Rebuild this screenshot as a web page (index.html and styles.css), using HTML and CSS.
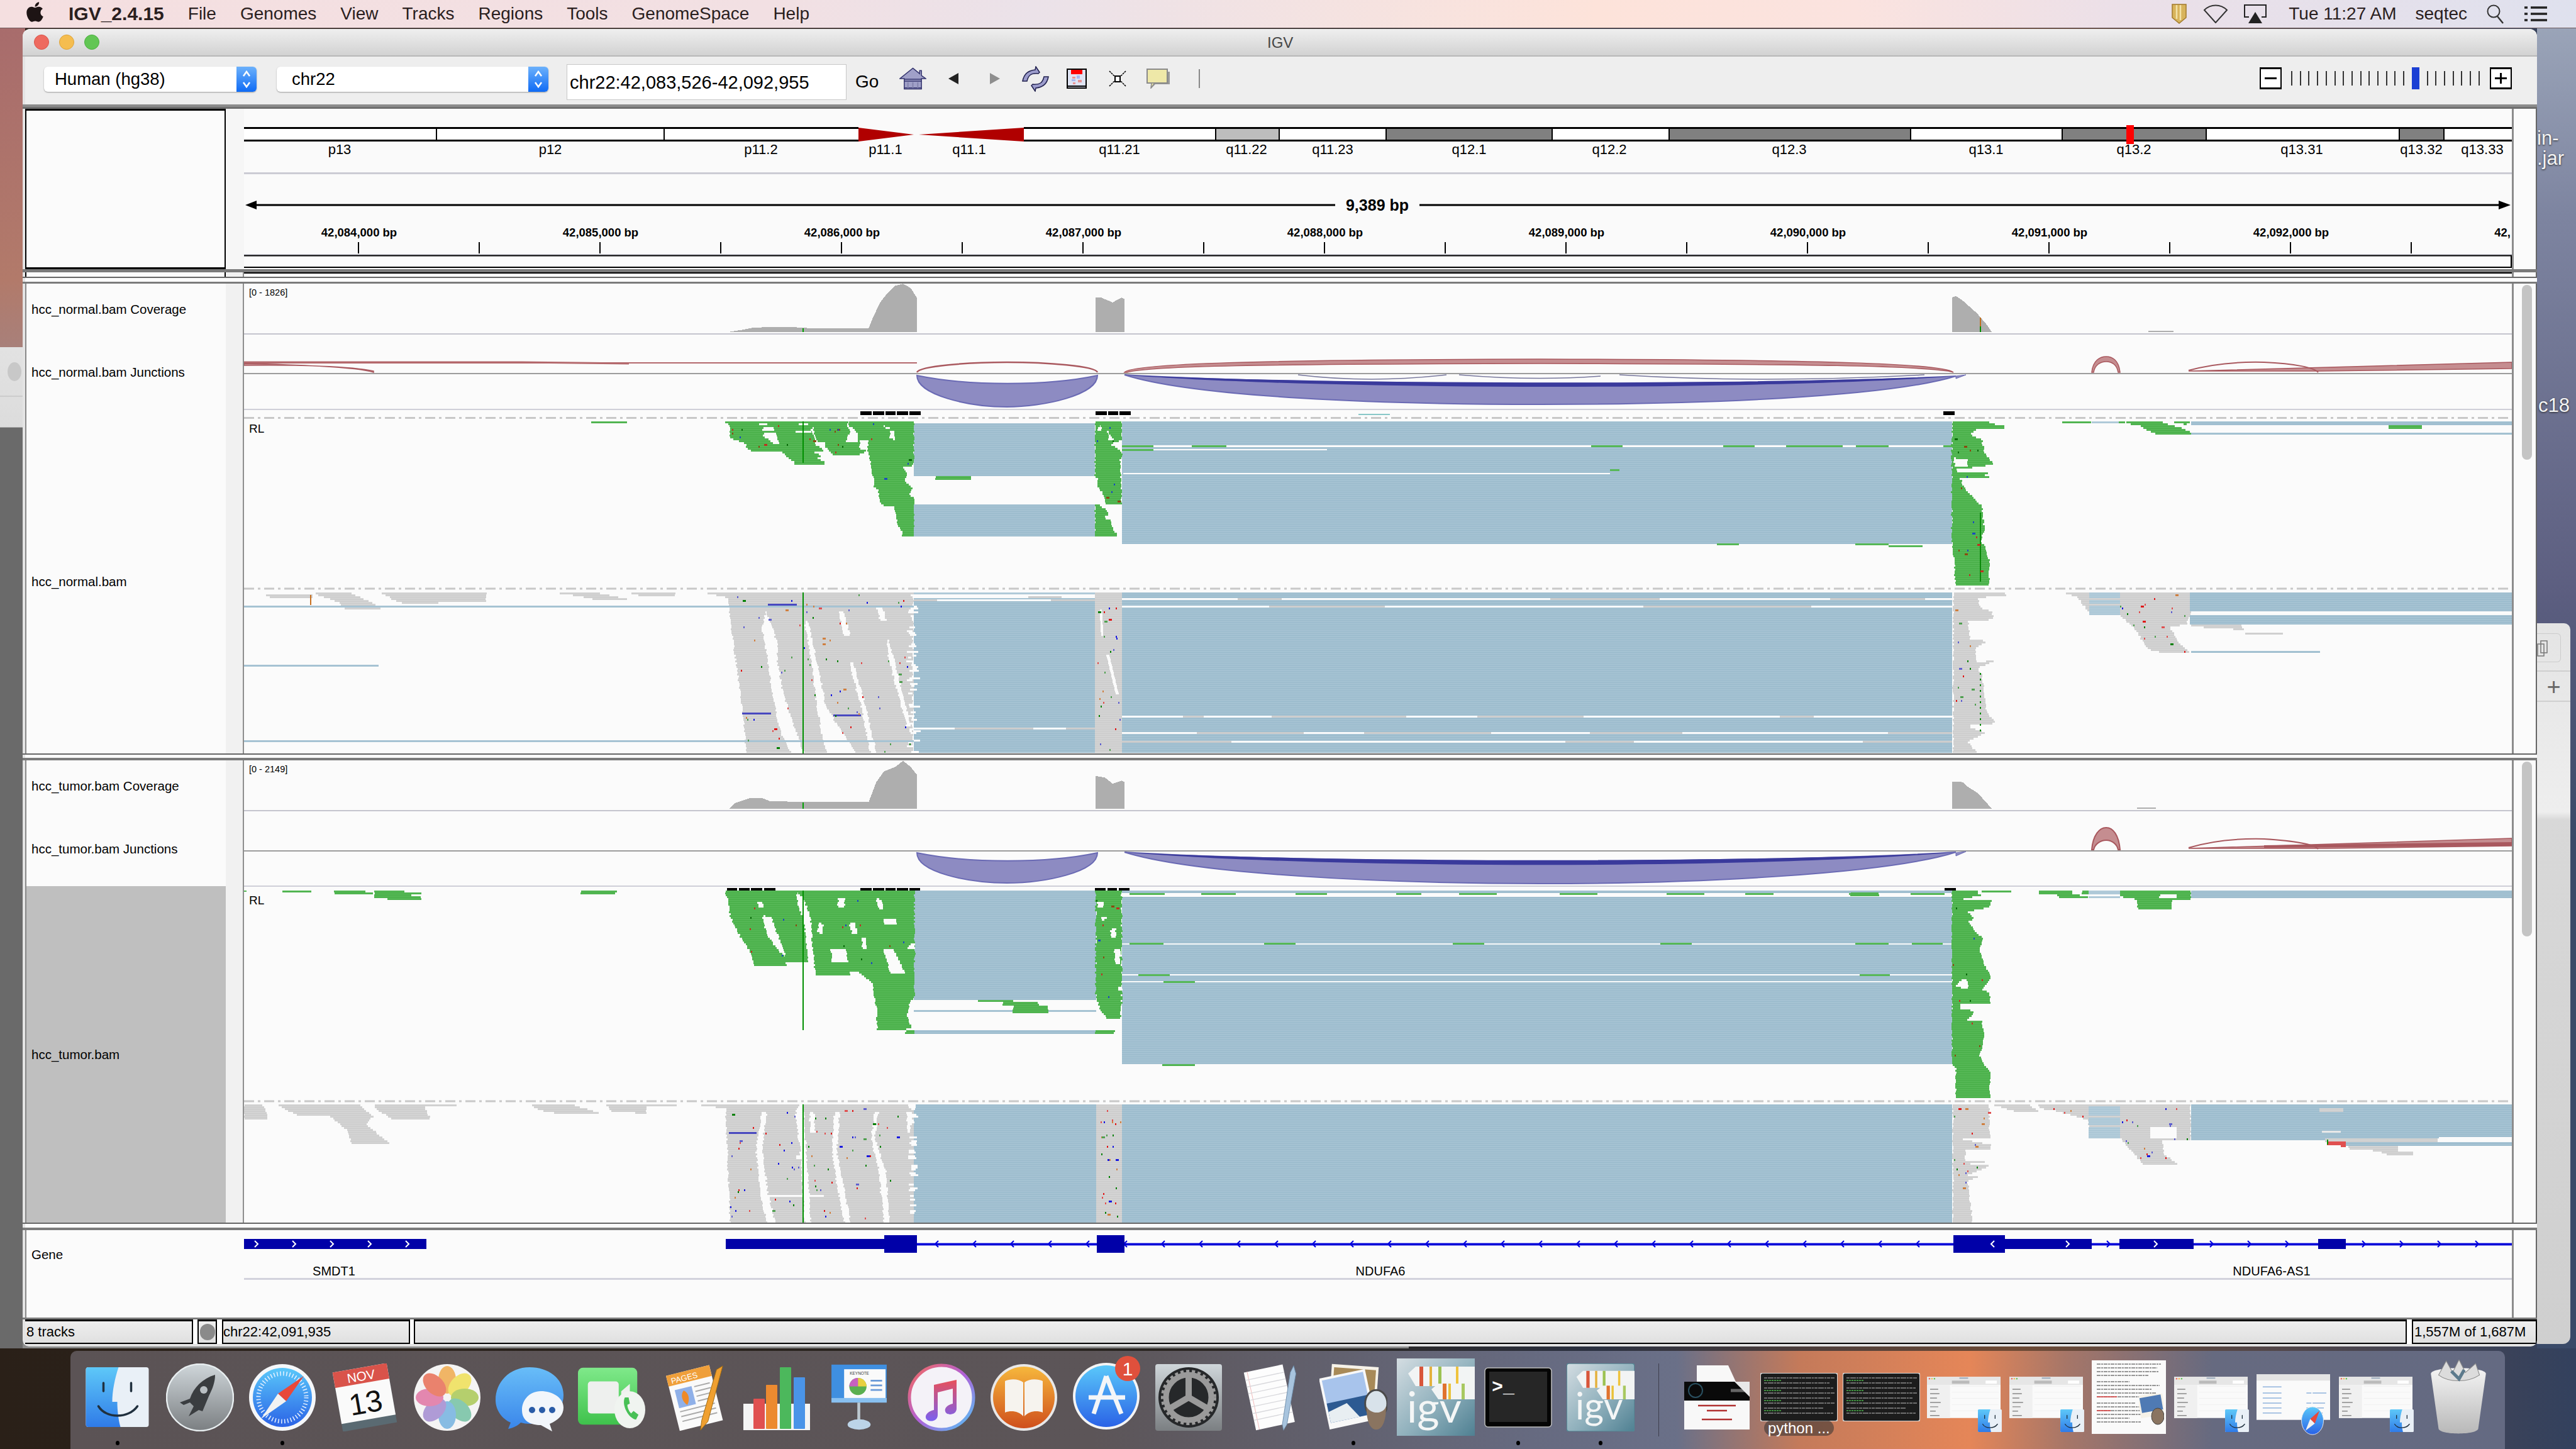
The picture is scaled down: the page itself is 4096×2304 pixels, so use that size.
FILE: index.html
```html
<!DOCTYPE html>
<html lang="en">
<head>
<meta charset="utf-8">
<title>IGV</title>
<link rel="stylesheet" href="styles.css">
</head>
<body>
<svg class="defs" aria-hidden="true">
  <defs>
    <linearGradient id="gFinder" x1="0" y1="0" x2="0" y2="1"><stop offset="0" stop-color="#5ec8f8"/><stop offset="1" stop-color="#2f7be8"/></linearGradient>
    <linearGradient id="gSilver" x1="0" y1="0" x2="0" y2="1"><stop offset="0" stop-color="#cfd6da"/><stop offset="1" stop-color="#7b7f82"/></linearGradient>
    <linearGradient id="gBlue" x1="0" y1="0" x2="0" y2="1"><stop offset="0" stop-color="#5ac8fa"/><stop offset="1" stop-color="#2a62e6"/></linearGradient>
    <linearGradient id="gMsg" x1="0" y1="0" x2="0" y2="1"><stop offset="0" stop-color="#68bdf8"/><stop offset="1" stop-color="#3a86ea"/></linearGradient>
    <linearGradient id="gFace" x1="0" y1="0" x2="0" y2="1"><stop offset="0" stop-color="#7fe98a"/><stop offset="1" stop-color="#3fc24c"/></linearGradient>
    <linearGradient id="gBook" x1="0" y1="0" x2="0" y2="1"><stop offset="0" stop-color="#f6b73c"/><stop offset="1" stop-color="#cf4f1c"/></linearGradient>
    <linearGradient id="gTunes" x1="0" y1="0" x2="1" y2="1"><stop offset="0" stop-color="#f86a5a"/><stop offset=".5" stop-color="#b060d8"/><stop offset="1" stop-color="#50c8f8"/></linearGradient>
    <linearGradient id="gNote" x1="0" y1="0" x2="0" y2="1"><stop offset="0" stop-color="#e8505a"/><stop offset="1" stop-color="#7a60f0"/></linearGradient>
    <linearGradient id="gIgv" x1="0" y1="0" x2="1" y2="1"><stop offset="0" stop-color="#d4dde2"/><stop offset=".55" stop-color="#8fb0bc"/><stop offset="1" stop-color="#4f8092"/></linearGradient>
    <linearGradient id="gTrash" x1="0" y1="0" x2="0" y2="1"><stop offset="0" stop-color="#f4f4f4"/><stop offset="1" stop-color="#b8b8b8"/></linearGradient>
    <symbol id="finder" viewBox="0 0 100 95">
      <rect width="100" height="95" rx="4" fill="#e9f0f7"/>
      <path d="M4 0H52C46 18 42 38 42 55H50C50 70 52 84 55 95H4a4 4 0 0 1-4-4V4a4 4 0 0 1 4-4z" fill="url(#gFinder)"/>
      <path d="M28 25V38M72 25V38" stroke="#20303e" stroke-width="3.5" stroke-linecap="round"/>
      <path d="M20 62C32 82 68 82 82 62" fill="none" stroke="#20303e" stroke-width="3.5" stroke-linecap="round"/>
    </symbol>
    <symbol id="igvmark" viewBox="0 0 124 123">
      <path d="M18 24L30 13H124V44H30Z" fill="#f2f4f4"/>
      <path d="M36 13h6v31h-6z" fill="#d8553a"/>
      <path d="M52 13h4v31h-4z" fill="#e4b13c"/><path d="M66 13h5v31h-5z" fill="#9cc252"/><path d="M94 13h4v31h-4z" fill="#efc33c"/>
      <path d="M55 49L66 40H124V65H66Z" fill="#f2f4f4"/>
      <path d="M73 40h6v25h-6z" fill="#e0732e"/><path d="M82 40h4v25h-4z" fill="#e9c23a"/><path d="M103 40h5v25h-5z" fill="#a8c860"/>
      <text x="16" y="102" class="igv-word">igv</text>
    </symbol>
    <symbol id="finderwin" viewBox="0 0 118 66">
      <rect width="118" height="66" fill="#fafafa"/>
      <rect width="118" height="13" fill="#e6e6e6"/>
      <circle cx="4" cy="3" r="1.2" fill="#ee6a5f"/><circle cx="8" cy="3" r="1.2" fill="#f5bd4f"/><circle cx="12" cy="3" r="1.2" fill="#62c654"/>
      <rect x="52" y="1" width="14" height="2" fill="#9ab"/>
      <rect x="40" y="6" width="28" height="5" fill="#bbb"/><rect x="94" y="6" width="18" height="5" fill="#fff"/>
      <rect y="13" width="37" height="53" fill="#f0f0f0"/>
      <path d="M5 20H18M5 27H20M5 34H16M5 41H22M5 48H18M5 55H14M5 62H20" stroke="#888" stroke-width="1.5"/>
      <path d="M40 15H115M40 24.5H115M40 34.5H115M40 44.5H115M40 54.5H115" stroke="#f0f0f0" stroke-width="1"/>
    </symbol>
    <symbol id="termlines" viewBox="0 0 123 77">
      <rect width="123" height="77" rx="4" fill="#1c1c1c" stroke="#d8d8d8" stroke-width="2"/>
      <path d="M6 8H118M6 16H110M6 24H116M6 32H118M6 40H112M6 48H118M6 56H100M6 64H116" stroke="#8a8a8a" stroke-width="1.5" stroke-dasharray="5 1 9 1 3 1"/>
      <path d="M6 12H34M6 28H34M6 44H34M6 60H34" stroke="#49b449" stroke-width="1.5" stroke-dasharray="3 1"/>
    </symbol>
  </defs>
</svg>

<div class="desk-left"><div class="back-sheet"><span class="back-dot"></span></div></div>
<div class="desk-right">
  <div class="desk-label desk-label-bin">in-</div>
  <div class="desk-label desk-label-jar">.jar</div>
  <div class="desk-label desk-label-c18">c18</div>
  <div class="back-win">
    <div class="back-btn"><svg class="back-copy" viewBox="0 0 20 30"><path d="M6 3H16V22H6zM1 8H11V27H1z" fill="none" stroke="#777" stroke-width="1.5"/></svg></div>
    <div class="back-plus">+</div>
  </div>
</div>
<div class="desk-under"></div>

<header class="menubar">
  <svg class="apple" viewBox="0 0 384 512"><path fill="#1d1414" d="M318.7 268.7c-.2-36.7 16.4-64.4 50-84.8-18.8-26.9-47.2-41.7-84.7-44.6-35.5-2.8-74.3 20.7-88.5 20.7-15 0-49.4-19.7-76.4-19.7C63.3 141.2 4 184.8 4 273.5q0 39.3 14.4 81.2c12.8 36.7 59 126.7 107.2 125.2 25.2-.6 43-17.9 75.8-17.9 31.8 0 48.3 17.9 76.4 17.9 48.6-.7 90.4-82.5 102.6-119.3-65.2-30.7-61.7-90-61.7-91.9zm-56.6-164.2c27.3-32.4 24.8-61.9 24-72.5-24.1 1.4-52 16.4-67.9 34.9-17.5 19.8-27.8 44.3-25.6 71.9 26.1 2 49.9-11.4 69.5-34.3z"/></svg>
  <nav class="menus">
    <strong class="app-name">IGV_2.4.15</strong>
    <span>File</span><span>Genomes</span><span>View</span><span>Tracks</span><span>Regions</span><span>Tools</span><span>GenomeSpace</span><span>Help</span>
  </nav>
  <div class="status-items">
    <svg class="st-shield" viewBox="0 0 24 32"><path d="M1 1H23V22L12 31L1 22Z" fill="#d8b45c" stroke="#a17a2c" stroke-width="1.5"/><path d="M8 2V24M14 2V26" stroke="#f3e2a8" stroke-width="2.5"/></svg>
    <svg class="st-wifi" viewBox="0 0 40 30"><path d="M20 29L2 9C12 -1 28 -1 38 9Z" fill="none" stroke="#333" stroke-width="2"/></svg>
    <svg class="st-air" viewBox="0 0 36 30"><path d="M8 20H1V1H35V20H28" fill="none" stroke="#222" stroke-width="2"/><path d="M18 12L29 30H7Z" fill="#222"/></svg>
    <span class="st-time">Tue 11:27 AM</span>
    <span class="st-user">seqtec</span>
    <svg class="st-search" viewBox="0 0 28 32"><circle cx="11" cy="12" r="9.5" fill="none" stroke="#333" stroke-width="2"/><path d="M17 20L26 31" stroke="#333" stroke-width="2.5"/></svg>
    <svg class="st-list" viewBox="0 0 36 24"><path d="M0 2H5M10 2H36M0 12H5M10 12H36M0 22H5M10 22H36" stroke="#222" stroke-width="3.5"/></svg>
  </div>
</header>

<main class="window">
  <div class="titlebar">
    <span class="light light-red"></span><span class="light light-yellow"></span><span class="light light-green"></span>
    <span class="win-title">IGV</span>
  </div>
  <div class="toolbar">
    <div class="combo combo-genome"><span class="combo-text">Human (hg38)</span><span class="stepper"><svg class="stepper-svg" viewBox="0 0 32 40"><path d="M11 15L16 8L21 15M11 25L16 32L21 25" fill="none" stroke="#fff" stroke-width="2.5"/></svg></span></div>
    <div class="combo combo-chr"><span class="combo-text combo-chr-text">chr22</span><span class="stepper"><svg class="stepper-svg" viewBox="0 0 32 40"><path d="M11 15L16 8L21 15M11 25L16 32L21 25" fill="none" stroke="#fff" stroke-width="2.5"/></svg></span></div>
    <div class="locus">chr22:42,083,526-42,092,955</div>
    <div class="go">Go</div>
    <div class="tools">
      <span class="tool"><svg class="ic-home" viewBox="0 0 44 36"><path d="M22 1L33 10V5H36V13L43 18H36V35H8V18H1Z" fill="#a0a0c8" stroke="#34346e" stroke-width="1.5"/><path d="M8 19H36M8 22H36M8 33H36" stroke="#34346e" stroke-width="1.5"/><path d="M14 24V33M22 24V33M30 24V33" stroke="#8484ae" stroke-width="2"/></svg></span>
      <span class="tool"><svg class="ic-arrow" viewBox="0 0 17 18"><path d="M16 0V18L0 9Z" fill="#222"/></svg></span>
      <span class="tool"><svg class="ic-arrow" viewBox="0 0 17 18"><path d="M1 0V18L17 9Z" fill="#8e8e8e"/></svg></span>
      <span class="tool"><svg class="ic-refresh" viewBox="0 0 43 41"><path d="M22 1L28 10L26 12C14 11 10 15 8 24H1C3 13 10 7 21 6Z" fill="#9c9ccc" stroke="#20204e" stroke-width="1.5"/><path d="M21 40L15 31L17 29C29 30 33 26 35 17H42C40 28 33 34 22 35Z" fill="#9c9ccc" stroke="#20204e" stroke-width="1.5"/></svg></span>
      <span class="tool"><svg class="ic-region" viewBox="0 0 32 32"><rect x="1" y="1" width="30" height="30" fill="#dfe4f4" stroke="#000" stroke-width="2"/><rect x="7" y="2" width="18" height="7" fill="#f00"/><path d="M2 28H30" stroke="#000" stroke-width="2"/><path d="M9 13h5v3H9zM18 18h6v4h-6zM10 22h4v3h-4z" fill="#e89494"/><path d="M16 11h5v5h-5zM8 17h6v3H8z" fill="#a8b8f0"/></svg></span>
      <span class="tool"><svg class="ic-resize" viewBox="0 0 28 26"><rect x="10" y="9" width="8" height="9" fill="#fff" stroke="#000" stroke-width="2"/><path d="M1 1L9 9M27 1L19 9M1 25L9 17M27 25L19 17" stroke="#000" stroke-width="1.5" stroke-dasharray="3 1"/></svg></span>
      <span class="tool"><svg class="ic-note" viewBox="0 0 38 32"><path d="M9 26L7 32L14 25H37V5H9Z" fill="#999"/><rect x="1" y="1" width="32" height="22" fill="#eee8a8" stroke="#8a8a8a" stroke-width="2"/><path d="M8 23L7 31L13 23Z" fill="#eee8a8" stroke="#8a8a8a" stroke-width="1.5"/></svg></span>
      <span class="tool"><i class="tool-sep"></i></span>
    </div>
    <div class="zoomer">
      <span class="zoom-btn"><i class="zoom-minus"></i></span>
      <div class="zoom-ticks"><i></i><i></i><i></i><i></i><i></i><i></i><i></i><i></i><i></i><i></i><i></i><i></i><i></i><i></i><i class="zoom-thumb"></i><i></i><i></i><i></i><i></i><i></i><i></i><i></i></div>
      <span class="zoom-btn"><i class="zoom-minus"></i><i class="zoom-vert"></i></span>
    </div>
  </div>
  <div class="bar bar7"></div>

  <section class="row header-row">
    <div class="name-col header-name"></div>
    <div class="gutter"></div>
    <svg class="data header-svg" viewBox="388 173 3606 255">
      <rect x="388" y="173" width="3606" height="255" fill="#fafafa"/>
      <g class="cyto">
        <rect x="388" y="204" width="977" height="19" fill="#fff"/>
        <rect x="1628" y="204" width="305" height="19" fill="#fff"/><rect x="1933" y="204" width="101" height="19" fill="#bdbdbd"/>
        <rect x="2034" y="204" width="170" height="19" fill="#fff"/><rect x="2204" y="204" width="264" height="19" fill="#808080"/>
        <rect x="2468" y="204" width="186" height="19" fill="#fff"/><rect x="2654" y="204" width="384" height="19" fill="#808080"/>
        <rect x="3038" y="204" width="241" height="19" fill="#fff"/><rect x="3279" y="204" width="229" height="19" fill="#808080"/>
        <rect x="3508" y="204" width="307" height="19" fill="#fff"/><rect x="3815" y="204" width="71" height="19" fill="#808080"/>
        <rect x="3886" y="204" width="108" height="19" fill="#fff"/>
        <path d="M388 203.5H1365M1628 203.5H3994M388 223.5H1365M1628 223.5H3994" stroke="#000" stroke-width="3"/>
        <path d="M694 204V223M1056 204V223M1933 204V223M2034 204V223M2204 204V223M2468 204V223M2654 204V223M3038 204V223M3279 204V223M3508 204V223M3815 204V223M3886 204V223" stroke="#000" stroke-width="2"/>
        <path d="M1365 203L1453 214L1365 225ZM1628 203L1461 214L1628 225Z" fill="#b00000"/>
        <rect x="3381" y="199" width="12" height="30" fill="#f00"/>
      </g>
      <g class="cyto-labels">
        <text x="540" y="245">p13</text><text x="875" y="245">p12</text><text x="1210" y="245">p11.2</text><text x="1408" y="245">p11.1</text><text x="1541" y="245">q11.1</text><text x="1780" y="245">q11.21</text><text x="1982" y="245">q11.22</text><text x="2119" y="245">q11.23</text><text x="2336" y="245">q12.1</text><text x="2559" y="245">q12.2</text><text x="2845" y="245">q12.3</text><text x="3158" y="245">q13.1</text><text x="3393" y="245">q13.2</text><text x="3660" y="245">q13.31</text><text x="3850" y="245">q13.32</text><text x="3947" y="245">q13.33</text>
      </g>
      <rect x="388" y="274" width="3606" height="3" fill="#cbcbd4"/>
      <path d="M405 326H2123M2257 326H3976" stroke="#000" stroke-width="3"/>
      <path d="M390 326L408 319V333ZM3992 326L3973 319V333Z" fill="#000"/>
      <text class="span-label" x="2190" y="335">9,389 bp</text>
      <g class="ruler-labels">
        <text x="571" y="376">42,084,000 bp</text><text x="955" y="376">42,085,000 bp</text><text x="1339" y="376">42,086,000 bp</text><text x="1723" y="376">42,087,000 bp</text><text x="2107" y="376">42,088,000 bp</text><text x="2491" y="376">42,089,000 bp</text><text x="2875" y="376">42,090,000 bp</text><text x="3259" y="376">42,091,000 bp</text><text x="3643" y="376">42,092,000 bp</text><text x="3979" y="376">42,</text>
      </g>
      <path d="M570 385V403M762 385V403M954 385V403M1146 385V403M1338 385V403M1530 385V403M1722 385V403M1914 385V403M2106 385V403M2298 385V403M2490 385V403M2682 385V403M2874 385V403M3066 385V403M3258 385V403M3450 385V403M3642 385V403M3834 385V403" stroke="#000" stroke-width="2"/>
      <rect x="388" y="404" width="3606" height="2" fill="#cbcbd4"/>
      <path d="M388 406.5H3993V425H388" fill="#fbfbfb" stroke="#000" stroke-width="2"/>
    </svg>
    <div class="scroll-col"></div>
  </section>
  <div class="bar bar5"></div>
  <div class="row blank7"><div class="name-col pane-name"></div><div class="gutter"></div><div class="pane-data"></div><div class="scroll-col"></div></div>
  <div class="bar bar2"></div>
  <div class="blank6"></div>
  <div class="bar bar3"></div>

  <section class="row panel panel-normal">
    <div class="name-col names">
      <div class="name name-cov">hcc_normal.bam Coverage</div>
      <div class="name name-jun">hcc_normal.bam Junctions</div>
      <div class="name name-bam-n">hcc_normal.bam</div>
    </div>
    <div class="gutter"></div>
    <svg class="data" id="trackNormal" viewBox="388 451 3606 747"></svg>
    <div class="scroll-col"><div class="thumb"></div></div>
  </section>
  <div class="bar bar2"></div>
  <div class="blank5"></div>
  <div class="bar bar4"></div>

  <section class="row panel panel-tumor">
    <div class="name-col names">
      <div class="name name-cov">hcc_tumor.bam Coverage</div>
      <div class="name name-jun">hcc_tumor.bam Junctions</div>
      <div class="name name-bam-t">hcc_tumor.bam</div>
    </div>
    <div class="gutter"></div>
    <svg class="data" id="trackTumor" viewBox="388 1209 3606 735"></svg>
    <div class="scroll-col"><div class="thumb"></div></div>
  </section>
  <div class="bar bar2"></div>
  <div class="blank6"></div>
  <div class="bar bar4"></div>

  <section class="row panel panel-gene">
    <div class="name-col names"><div class="name name-gene">Gene</div></div>
    <svg class="data gene-svg" id="trackGene" viewBox="359 1956 3635 139">
      <rect x="359" y="1956" width="3635" height="139" fill="#fbfbfb"/>
      <rect x="388" y="2032" width="3606" height="3" fill="#d2d2dc"/>
      <g class="gene-names"><text x="531" y="2028">SMDT1</text><text x="2195" y="2028">NDUFA6</text><text x="3612" y="2028">NDUFA6-AS1</text></g>
    </svg>
    <div class="scroll-col"></div>
  </section>
  <div class="bar bar3"></div>
  <footer class="statusbar">
    <div class="cell cell-tracks">8 tracks</div>
    <div class="cell cell-icon"><i class="busy"></i></div>
    <div class="cell cell-pos">chr22:42,091,935</div>
    <div class="cell cell-fill"></div>
    <div class="cell cell-mem">1,557M of 1,687M</div>
  </footer>
</main>

<footer class="dock">
  <div class="slot"><svg class="ic ic-finder"><use href="#finder"/></svg><i class="run"></i></div>
  <div class="slot"><svg class="ic" viewBox="0 0 108 108"><circle cx="54" cy="54" r="53" fill="url(#gSilver)" stroke="#e8eef0" stroke-width="2.5"/><path d="M78 18C58 24 44 38 38 56L22 62L28 66L38 62L44 68L36 84L52 74L58 76L68 52C74 40 78 30 78 18Z" fill="#3a3d40"/><circle cx="60" cy="42" r="6" fill="#b9bfc3"/></svg></div>
  <div class="slot"><svg class="ic" viewBox="0 0 108 108"><circle cx="54" cy="54" r="53" fill="#f5f7f9"/><circle cx="54" cy="54" r="47" fill="url(#gBlue)"/><circle cx="54" cy="54" r="38" fill="none" stroke="#e8f2ff" stroke-width="7" stroke-dasharray="1.5 3.5"/><path d="M88 20L47 48L60 60Z" fill="#e8483a"/><path d="M20 88L47 48L60 60Z" fill="#f2f2f2"/></svg><i class="run"></i></div>
  <div class="slot"><svg class="ic" viewBox="0 0 104 104"><g transform="rotate(-10 52 52)"><rect x="10" y="6" width="84" height="92" fill="#5a6a72"/><rect x="10" y="6" width="84" height="80" fill="#fafafa"/><rect x="10" y="6" width="84" height="24" fill="#d9534a"/><text class="cal-month" x="52" y="26">NOV</text><text class="cal-day" x="52" y="76">13</text></g></svg></div>
  <div class="slot"><svg class="ic" viewBox="0 0 108 108"><circle cx="54" cy="54" r="53" fill="#f4f4f4"/><g opacity=".82"><ellipse cx="54" cy="26" rx="14" ry="22" fill="#f0a848"/><ellipse cx="74" cy="34" rx="14" ry="22" fill="#f0e050" transform="rotate(45 74 34)"/><ellipse cx="82" cy="54" rx="22" ry="14" fill="#a8c850"/><ellipse cx="74" cy="74" rx="14" ry="22" fill="#70c0a0" transform="rotate(-45 74 74)"/><ellipse cx="54" cy="82" rx="14" ry="22" fill="#70b0e0"/><ellipse cx="34" cy="74" rx="14" ry="22" fill="#a088d0" transform="rotate(45 34 74)"/><ellipse cx="26" cy="54" rx="22" ry="14" fill="#e070a0"/><ellipse cx="34" cy="34" rx="14" ry="22" fill="#e86a50" transform="rotate(-45 34 34)"/></g></svg></div>
  <div class="slot"><svg class="ic" viewBox="0 0 108 108"><path d="M54 6C22 6 0 30 0 58C0 74 10 88 24 94L20 104C30 102 36 98 40 94Q47 96 54 96C84 96 108 78 108 50C108 24 84 6 54 6Z" fill="url(#gMsg)"/><path d="M72 44C54 44 42 58 42 74C42 92 56 98 72 98L90 108L86 96C100 90 108 82 108 70C108 54 90 44 72 44Z" fill="#f2f6fb"/><circle cx="58" cy="74" r="5" fill="#2a5ca8"/><circle cx="74" cy="74" r="5" fill="#2a5ca8"/><circle cx="90" cy="74" r="5" fill="#2a5ca8"/></svg></div>
  <div class="slot"><svg class="ic" viewBox="0 0 110 100"><rect x="0" y="2" width="96" height="92" rx="8" fill="url(#gFace)"/><rect x="16" y="24" width="50" height="52" rx="5" fill="#eef0ee"/><path d="M70 40L84 28V72L70 60Z" fill="#eef0ee"/><ellipse cx="84" cy="70" rx="25" ry="30" fill="#f0f4f0"/><path d="M76 50C70 62 82 84 94 86L98 78L90 72L86 76C82 72 80 66 80 62L84 60L82 50Z" fill="#48c056"/></svg></div>
  <div class="slot"><svg class="ic" viewBox="0 0 100 110"><g transform="rotate(-14 50 55)"><rect x="14" y="10" width="72" height="92" fill="#fafafa"/><path d="M14 10H86V28H14Z" fill="#ef9f3a"/><text class="pages-word" x="20" y="25">PAGES</text><rect x="22" y="36" width="28" height="30" fill="#8fb0e8"/><path d="M36 40C44 46 42 58 36 64C30 58 28 46 36 40Z" fill="#ee8a28"/><path d="M54 38H80M54 46H80M54 54H80M54 62H80M22 72H80M22 80H80M22 88H80" stroke="#aaa" stroke-width="2"/></g><path d="M96 4L86 10L62 92L60 108L72 94Z" fill="#f0a030" stroke="#a06a10" stroke-width="1"/></svg></div>
  <div class="slot"><svg class="ic ic-num" viewBox="0 0 106 108"><rect x="0" y="64" width="106" height="42" fill="#f4f4f4"/><rect x="16" y="56" width="18" height="48" rx="1" fill="#e05050"/><rect x="36" y="34" width="18" height="70" rx="1" fill="#ec8a30"/><rect x="58" y="6" width="18" height="98" rx="1" fill="#4cb85c"/><rect x="80" y="22" width="18" height="82" rx="1" fill="#4a94e8"/></svg></div>
  <div class="slot"><svg class="ic" viewBox="0 0 100 118"><rect x="2" y="2" width="96" height="64" fill="#3f8fe0"/><rect x="2" y="60" width="96" height="8" fill="#88c0f0"/><rect x="24" y="10" width="72" height="50" fill="#fafafa"/><text class="key-word" x="34" y="20">KEYNOTE</text><circle cx="48" cy="40" r="15" fill="#5aaf50"/><path d="M48 40V25A15 15 0 0 1 63 40Z" fill="#e8d040"/><path d="M48 40H33A15 15 0 0 1 48 25Z" fill="#c860c0"/><path d="M70 30H90M70 38H90M70 46H90" stroke="#6a9ad8" stroke-width="3"/><rect x="47" y="68" width="5" height="36" fill="#bcc8d0"/><ellipse cx="50" cy="106" rx="20" ry="9" fill="#bcd4e8"/></svg></div>
  <div class="slot"><svg class="ic" viewBox="0 0 108 108"><circle cx="54" cy="54" r="51" fill="#f4f2f8" stroke="url(#gTunes)" stroke-width="5"/><path d="M42 34L78 26V72C78 82 62 84 60 76C58 68 70 64 72 64V40L48 46V82C48 94 30 94 29 86C28 78 40 74 42 74Z" fill="url(#gNote)"/></svg></div>
  <div class="slot"><svg class="ic" viewBox="0 0 108 108"><circle cx="54" cy="54" r="53" fill="#e8e8e8"/><circle cx="54" cy="54" r="49" fill="url(#gBook)"/><path d="M53 30C46 24 32 24 24 28V78C34 74 46 76 53 84ZM55 30C62 24 76 24 84 28V78C74 74 62 76 55 84Z" fill="#f6f3ee"/></svg></div>
  <div class="slot"><svg class="ic ic-store" viewBox="0 0 108 118"><circle cx="54" cy="64" r="53" fill="#f4f4f4"/><circle cx="54" cy="64" r="49" fill="url(#gBlue)"/><path d="M54 32L34 92M54 32L78 92M26 66H84" stroke="#f4f6f8" stroke-width="7" fill="none"/><circle cx="88" cy="20" r="20" fill="#e0503c"/><text class="badge-num" x="88" y="31">1</text></svg></div>
  <div class="slot"><svg class="ic" viewBox="0 0 108 108"><rect x="1" y="1" width="106" height="106" rx="4" fill="url(#gSilver)"/><circle cx="54" cy="54" r="48" fill="#26282a"/><circle cx="54" cy="54" r="36" fill="none" stroke="#9a9a9a" stroke-width="9"/><circle cx="54" cy="54" r="41" fill="none" stroke="#9a9a9a" stroke-width="6" stroke-dasharray="5 4"/><path d="M54 54V20M54 54L25 71M54 54L83 71" stroke="#9a9a9a" stroke-width="10"/></svg></div>
  <div class="slot"><svg class="ic" viewBox="0 0 100 120"><g transform="rotate(-12 46 60)"><rect x="12" y="8" width="70" height="104" fill="#fdfdfd"/><path d="M18 8V112" stroke="#f2b8b8" stroke-width="1"/><path d="M12 22H82M12 34H82M12 46H82M12 58H82M12 70H82M12 82H82M12 94H82" stroke="#d8d8dc" stroke-width="1.5"/></g><path d="M90 4L84 16L70 108L72 118L78 108L94 18Z" fill="#a8c4de" stroke="#6a8aa8" stroke-width="1"/></svg></div>
  <div class="slot"><svg class="ic" viewBox="0 0 110 104"><g transform="rotate(4 50 30)"><rect x="18" y="0" width="76" height="82" fill="#f6f2e8"/><rect x="22" y="5" width="68" height="70" fill="#a88a58"/></g><g transform="rotate(-12 40 60)"><rect x="8" y="14" width="76" height="84" fill="#f8f8f8"/><rect x="12" y="18" width="68" height="70" fill="#a8c4ec"/><path d="M12 56H80V88H12Z" fill="#2d5a92"/><path d="M12 70L44 62L60 88H12Z" fill="#e8eef2"/></g><ellipse cx="92" cy="62" rx="18" ry="22" fill="#d8e2ea" stroke="#4a4a4a" stroke-width="3"/><path d="M76 66C76 90 82 104 92 104S108 90 108 66C104 80 82 80 76 66Z" fill="#8a7460"/></svg><i class="run"></i></div>
  <div class="slot"><svg class="ic ic-igv-big" viewBox="0 0 124 123"><rect width="124" height="123" fill="url(#gIgv)"/><use href="#igvmark"/></svg></div>
  <div class="slot"><svg class="ic" viewBox="0 0 108 96"><rect x="1" y="1" width="106" height="94" rx="5" fill="#050505" stroke="#bdbdbd" stroke-width="1.5"/><rect x="8" y="7" width="92" height="80" fill="#262626"/><text class="term-word" x="12" y="40">&gt;_</text></svg><i class="run"></i></div>
  <div class="slot"><svg class="ic" viewBox="0 0 124 124"><rect width="124" height="124" rx="5" fill="url(#gIgv)" stroke="#4f8a96" stroke-width="2"/><use href="#igvmark"/></svg><i class="run"></i></div>
  <div class="dock-sep"><i></i></div>
  <div class="slot"><svg class="ic" viewBox="0 0 108 102"><path d="M22 0H72L84 26V40H22Z" fill="#f8f8f8"/><rect x="2" y="26" width="104" height="76" fill="#f8f8f8"/><rect x="2" y="26" width="104" height="30" fill="#0a0a0a"/><circle cx="20" cy="40" r="11" fill="none" stroke="#2a5060" stroke-width="2"/><path d="M76 40H100" stroke="#666" stroke-width="5"/><path d="M24 64H84M38 72H70M30 86H78" stroke="#b03030" stroke-width="2.5"/><path d="M82 26L106 26L106 50Z" fill="#e8e8e8"/></svg></div>
  <div class="slot slot-term"><svg class="ic-thumb"><use href="#termlines"/></svg><span class="python-tag">python ...</span></div>
  <div class="slot slot-term"><svg class="ic-thumb"><use href="#termlines"/></svg></div>
  <div class="slot slot-win"><svg class="ic-win"><use href="#finderwin"/></svg><svg class="ic-mini"><use href="#finder"/></svg></div>
  <div class="slot slot-win"><svg class="ic-win"><use href="#finderwin"/></svg><svg class="ic-mini"><use href="#finder"/></svg></div>
  <div class="slot slot-doc"><svg class="ic-doc" viewBox="0 0 118 117"><rect width="118" height="117" fill="#fafafa"/><path d="M8 6H110M8 12H104M8 18H106M8 24H90M8 34H60M8 40H108M8 46H96M8 52H102M8 58H84M8 68H70M8 74H108M8 80H88M8 86H100M8 92H60M8 98H78" stroke="#777" stroke-width="1.6" stroke-dasharray="6 1 3 1"/><path d="M8 58H40M8 80H30" stroke="#e04040" stroke-width="1.6"/></svg><svg class="ic-mini-prev" viewBox="0 0 40 50"><rect width="40" height="36" fill="#f6f2e8" transform="rotate(-10 20 18)"/><rect x="3" y="4" width="34" height="24" fill="#4f7ab4" transform="rotate(-10 20 18)"/><ellipse cx="30" cy="36" rx="10" ry="13" fill="#8a7460" stroke="#444"/></svg></div>
  <div class="slot slot-win"><svg class="ic-win"><use href="#finderwin"/></svg><svg class="ic-mini"><use href="#finder"/></svg></div>
  <div class="slot slot-safari"><svg class="ic-win ic-win-safari" viewBox="0 0 118 73"><rect width="118" height="73" fill="#fafafa"/><rect width="118" height="10" fill="#e4e4e4"/><path d="M10 20H40M10 30H112M10 38H50M10 46H110M10 54H108M10 62H106" stroke="#8fb2dc" stroke-width="1.5" stroke-dasharray="30 40 8 2"/></svg><svg class="ic-mini-safari" viewBox="0 0 40 50"><ellipse cx="20" cy="25" rx="19" ry="24" fill="url(#gBlue)" stroke="#eee"/><path d="M32 8L16 22L24 30Z" fill="#e8483a"/><path d="M8 42L16 22L24 30Z" fill="#f2f2f2"/></svg></div>
  <div class="slot slot-win"><svg class="ic-win"><use href="#finderwin"/></svg><svg class="ic-mini"><use href="#finder"/></svg></div>
  <div class="slot"><svg class="ic ic-trash" viewBox="0 0 90 116"><path d="M2 22C2 10 88 10 88 22L76 108C74 118 16 118 14 108Z" fill="url(#gTrash)"/><path d="M14 24L26 2L36 20L46 0L56 20L72 6L78 24C60 36 30 36 14 24Z" fill="#dcdcdc" stroke="#888"/><path d="M34 18L46 30L54 16" stroke="#5c7a8c" stroke-width="5" fill="none"/></svg></div>
</footer>
<script src="app.js"></script>
</body>
</html>
```
FILE: styles.css
```css
* { box-sizing: border-box; }
html, body { margin: 0; padding: 0; }
body {
  width: 4096px; height: 2304px; position: relative; overflow: hidden;
  font-family: "Liberation Sans", Arial, sans-serif; color: #000;
  background: linear-gradient(90deg, #2a2018 0%, #2a2623 52%, #2a3040 62%, #6d4a35 78%, #33415e 100%);
}
.defs { position: absolute; width: 0; height: 0; }

/* desktop behind the window */
.desk-left { position: absolute; left: 0; top: 44px; width: 40px; height: 2100px;
  background: linear-gradient(180deg, #a86c6c 0, #b27a6a 400px, #a8807a 508px, #e2e2e2 508px, #dcdcdc 636px, #6a6a6a 636px); }
.back-sheet { position: absolute; left: 0; top: 508px; width: 36px; height: 128px; border-bottom: 1px solid #aaa; }
.back-sheet::before { content: ""; position: absolute; left: 0; right: 0; top: 77px; border-top: 2px solid #ccc; }
.back-dot { position: absolute; left: 12px; top: 24px; width: 22px; height: 30px; border-radius: 50%; background: #c8c8c8; }
.desk-right { position: absolute; left: 4034px; top: 44px; width: 62px; height: 2100px;
  background: linear-gradient(180deg, #9aa4b8 0, #7d84a0 300px, #5c5e80 900px, #3a4a68 1290px); overflow: hidden; }
.desk-label { position: absolute; left: 0; color: #f4f4f4; font-size: 31px; text-shadow: 0 1px 3px #222; }
.desk-label-bin { top: 158px; }
.desk-label-jar { top: 190px; }
.desk-label-c18 { top: 583px; left: 2px; }
.back-win { position: absolute; left: 0; top: 947px; width: 53px; height: 1146px; border-radius: 0 10px 12px 0;
  background: linear-gradient(180deg, #e4e4e4 0, #eeeeee 300px, #d8d8d8 313px, #cfcfcf 100%); }
.back-btn { position: absolute; left: 0; top: 16px; width: 38px; height: 46px; border: 1px solid #ccc; border-left: 0; border-radius: 0 6px 6px 0; }
.back-copy { width: 20px; height: 30px; display: block; margin-top: 8px; }
.back-plus { position: absolute; left: 0; top: 75px; width: 53px; height: 50px; border-top: 2px solid #cfcfcf; border-bottom: 2px solid #cfcfcf; text-align: center; font-size: 38px; line-height: 48px; color: #666; }
.desk-under { position: absolute; left: 36px; top: 2136px; width: 2204px; height: 8px; background: #8a8a8a; }

/* menu bar */
.menubar { position: absolute; left: 0; top: 0; width: 4096px; height: 45px; display: flex; align-items: center; padding: 0 46px 1px 42px;
  border-bottom: 1px solid #6e5b5d; font-size: 28px; color: #2a2020;
  background: linear-gradient(90deg, #f5dfe0 0, #f2e0e3 30%, #ebe2e9 40%, #fde3da 62%, #fbe3df 72%, #ece0e8 82%, #dfe1ee 100%); }
.apple { width: 27px; height: 36px; flex: none; margin-top: -5px; }
.menus { display: flex; align-items: center; gap: 38px; margin-left: 40px; }
.app-name { font-weight: 700; font-size: 30px; }
.status-items { margin-left: auto; display: flex; align-items: center; }
.st-shield { width: 24px; height: 32px; }
.st-wifi { width: 40px; height: 30px; margin-left: 26px; }
.st-air { width: 36px; height: 30px; margin-left: 25px; }
.st-time { margin-left: 35px; }
.st-user { margin-left: 30px; }
.st-search { width: 28px; height: 32px; margin-left: 31px; }
.st-list { width: 36px; height: 24px; margin-left: 32px; }

/* window */
.window { position: absolute; left: 36px; top: 46px; width: 3998px; height: 2095px; padding: 0 0 4px 4px; border-radius: 12px 12px 10px 10px; background: #e4e4e4; display: flex; flex-direction: column; overflow: hidden; }
.titlebar { flex: none; height: 44px; margin-left: -4px; padding-left: 18px; display: flex; align-items: center; gap: 16px; position: relative; background: linear-gradient(180deg, #efefef, #d2d2d2); border-bottom: 2px solid #b8b8b8; }
.light { width: 24px; height: 24px; border-radius: 50%; }
.light-red { background: #ee6a5f; border: 1px solid #d8544a; }
.light-yellow { background: #f5bd4f; border: 1px solid #dca23a; }
.light-green { background: #62c654; border: 1px solid #4cae40; }
.win-title { position: absolute; left: 1979px; top: 8px; font-size: 24px; color: #454545; }
.toolbar { flex: none; height: 76px; background: #eeeeee; display: flex; align-items: center; padding: 0 40px 0 30px; }
.combo { height: 40px; background: #fff; border-radius: 6px; box-shadow: 0 1px 2px #999; display: flex; align-items: center; justify-content: space-between; margin-top: -4px; }
.combo-genome { width: 338px; }
.combo-chr { width: 432px; margin-left: 32px; }
.combo-text { font-size: 27.5px; padding-left: 17px; }
.combo-chr-text { padding-left: 24px; }
.stepper { width: 32px; height: 40px; border-radius: 0 6px 6px 0; background: linear-gradient(180deg, #6cb1fb, #0f6bf5); flex: none; }
.stepper-svg { display: block; width: 32px; height: 40px; }
.locus { width: 445px; height: 57px; margin-left: 29px; margin-top: 4px; padding: 12px 0 0 4px; background: #fff; border: 1px solid #c8c8c8; font-size: 29px; white-space: nowrap; }
.go { width: 39px; margin-left: 14px; font-size: 28px; margin-top: 4px; }
.tools { display: flex; align-items: center; margin-left: 20px; margin-top: -6px; }
.tool { width: 65px; display: flex; justify-content: center; align-items: center; }
.ic-home { width: 43px; height: 36px; }
.ic-arrow { width: 17px; height: 18px; }
.ic-refresh { width: 43px; height: 41px; }
.ic-region { width: 32px; height: 32px; }
.ic-resize { width: 28px; height: 26px; }
.ic-note { width: 38px; height: 32px; }
.tool-sep { width: 2px; height: 30px; background: #888; }
.zoomer { margin-left: auto; display: flex; align-items: center; margin-top: -8px; }
.zoom-btn { width: 35px; height: 35px; border-style: solid; border-color: #000; border-width: 3px 2px; background: #fff; position: relative; display: block; }
.zoom-minus { position: absolute; left: 6px; right: 6px; top: 13px; height: 3px; background: #000; }
.zoom-vert { position: absolute; left: 14px; top: 6px; bottom: 6px; width: 3px; background: #000; }
.zoom-ticks { width: 300px; margin: 0 16px 0 15px; height: 35px; display: flex; align-items: center; justify-content: space-between; }
.zoom-ticks i { width: 2px; height: 23px; background: #333; }
.zoom-ticks .zoom-thumb { width: 12px; height: 35px; background: #1b3fd4; }

.bar { flex: none; background: #7b7b7b; margin-left: -4px; }
.bar7 { height: 7px; background: linear-gradient(180deg, #8c8c8c 0 4px, #6f6f6f 4px); }
.bar5 { height: 5px; background: #7a7a7a; }
.bar4 { height: 4px; }
.bar3 { height: 3px; }
.bar2 { height: 2px; background: #666; }
.blank5 { flex: none; height: 5px; background: #fbfbfb; }
.blank6 { flex: none; height: 6px; background: #fbfbfb; }
.row { flex: none; display: flex; background: #fbfbfb; }
.name-col { width: 319px; flex: none; background: #fbfbfb; }
.gutter { width: 29px; flex: none; background: #f1f1f1; border-right: 2px solid #8e8e8e; }
.data { width: 3606px; flex: none; display: block; background: #fbfbfb; overflow: hidden; }
.scroll-col { width: 40px; flex: none; background: #fbfbfb; border-left: 3px solid #8c8c8c; border-right: 2px solid #666; padding: 2px 0 0 13px; }
.thumb { width: 16px; height: 278px; border-radius: 8px; background: #c4c4c4; }
.header-row { height: 255px; }
.header-name { border-top: 3px solid #000; border-bottom: 3px solid #000; border-right: 2px solid #000; border-left: 2px solid #000; height: 255px; }
.header-row .gutter { border-right: 0; background: #f6f6f6; }
.header-svg { height: 255px; }
.blank7 { height: 7px; }
.pane-name { border-left: 2px solid #000; border-right: 2px solid #000; }
.pane-data { width: 3606px; border-top: 2px solid #000; background: #fbfbfb; }
.panel-normal { height: 747px; }
.panel-tumor { height: 735px; }
.panel-gene { height: 139px; }
.panel .data { height: 100%; }
.gene-svg { width: 3635px; }
.panel-gene .names { width: 319px; }
.names { display: flex; flex-direction: column; border-left: 2px solid #888; }
.name { display: flex; align-items: center; padding-left: 8px; font-size: 20.5px; white-space: nowrap; }
.name-cov { height: 81px; }
.name-jun { height: 119px; }
.name-bam-n { flex: 1; }
.name-bam-t { flex: 1; background: #bfbfbf; }
.name-gene { height: 78px; }

.statusbar { flex: none; height: 39px; display: flex; background: #fff; margin-left: 0; font-size: 22px; }
.cell { height: 39px; border-top: 3px solid #000; border-bottom: 2px solid #000; background: linear-gradient(180deg, #eeeeee, #e0e0e0); display: flex; align-items: center; white-space: nowrap; }
.cell-tracks { width: 267px; border-right: 2px solid #000; padding-left: 2px; }
.cell-icon { width: 31px; margin-left: 7px; border-left: 2px solid #000; border-right: 2px solid #000; justify-content: center; }
.busy { width: 24px; height: 26px; border-radius: 12px; background: #8a8a8a; }
.cell-pos { width: 299px; margin-left: 8px; border-left: 2px solid #000; border-right: 2px solid #000; }
.cell-fill { width: 3169px; margin-left: 6px; border-left: 2px solid #000; border-right: 2px solid #000; }
.cell-mem { width: 199px; margin-left: 8px; border-left: 2px solid #000; border-right: 2px solid #000; padding-left: 2px; }

/* svg text */
.cyto-labels text { font-size: 22px; text-anchor: middle; font-family: "Liberation Sans", sans-serif; }
.span-label { font-size: 25px; font-weight: 700; text-anchor: middle; font-family: "Liberation Sans", sans-serif; }
.ruler-labels text { font-size: 18.5px; font-weight: 700; text-anchor: middle; font-family: "Liberation Sans", sans-serif; }
.gene-names text { font-size: 20px; text-anchor: middle; font-family: "Liberation Sans", sans-serif; }
.scale-label { font-size: 14.5px; font-family: "Liberation Sans", sans-serif; }
.rl-label { font-size: 19px; font-family: "Liberation Sans", sans-serif; }

/* dock */
.dock { position: absolute; left: 112px; top: 2148px; width: 3871px; height: 156px; padding-left: 9px; display: flex; align-items: flex-start; border-radius: 10px 10px 0 0;
  background: linear-gradient(90deg, #5b5355 0, #5c5558 42%, #666a80 60%, #6a7088 66%, #c47a5a 71%, #e58658 78%, #a67668 82%, #666a80 88%, #646a82 100%); }
.slot { width: 131px; height: 156px; flex: none; position: relative; display: flex; justify-content: center; padding-top: 20px; }
.ic { width: 108px; height: 108px; display: block; }
.ic-finder { width: 101px; height: 95px; margin-top: 6px; }
.ic-num { height: 108px; }
.ic-store { height: 118px; margin-top: -12px; overflow: visible; }
.ic-igv-big { width: 124px; height: 123px; margin-top: -8px; }
.ic-trash { width: 92px; height: 118px; margin-top: -6px; }
.run { position: absolute; left: 63px; top: 143px; width: 6px; height: 7px; border-radius: 50%; background: #000; }
.dock-sep { width: 54px; flex: none; display: flex; justify-content: center; padding-top: 20px; }
.dock-sep i { width: 1px; height: 116px; background: #3e3e4e; }
.ic-thumb { width: 123px; height: 77px; margin-top: 15px; }
.python-tag { position: absolute; left: 10px; top: 110px; height: 25px; padding: 0 6px; border-radius: 13px; background: rgba(50,50,50,.55); color: #fff; font-size: 24px; line-height: 25px; white-space: nowrap; }
.ic-win { width: 117px; height: 66px; margin-top: 21px; }
.ic-win-safari { height: 73px; margin-top: 17px; }
.ic-doc { width: 118px; height: 117px; margin-top: -5px; }
.ic-mini { position: absolute; left: 87px; top: 93px; width: 40px; height: 36px; }
.ic-mini-prev { position: absolute; left: 82px; top: 68px; width: 40px; height: 50px; }
.ic-mini-safari { position: absolute; left: 76px; top: 88px; width: 40px; height: 46px; }
.igv-word { font-family: "Lato", "Liberation Sans", sans-serif; font-size: 68px; fill: #f4f6f6; }
.cal-month { font-size: 20px; fill: #fff; text-anchor: middle; font-family: "Liberation Sans", sans-serif; }
.cal-day { font-size: 46px; fill: #111; text-anchor: middle; font-family: "Liberation Sans", sans-serif; }
.pages-word { font-size: 13px; fill: #fff; font-family: "Liberation Sans", sans-serif; }
.key-word { font-size: 7px; fill: #333; font-family: "Liberation Sans", sans-serif; }
.badge-num { font-size: 30px; fill: #fff; text-anchor: middle; font-family: "Liberation Sans", sans-serif; }
.term-word { font-size: 30px; font-weight: 700; fill: #fff; font-family: "Liberation Mono", monospace; }
```
FILE: app.js
```js
(function () {
  var NS = 'http://www.w3.org/2000/svg';
  var T = {
    p: function (x, y) { return [x, y]; },
    z4: function (x, y) { return [x / .8253, 440 + y / 1.96]; },
    z5: function (x, y) { return [x / .8253, 1200 + y / 2.063]; },
    z9: function (x, y) { return [2900 + x / 1.311, 440 + y / 1.96]; },
    z12: function (x, y) { return [2900 + x / 1.311, 1200 + y / 2.063]; },
    z10: function (x, y) { return [1100 + x / 1.96, 620 + y / 3]; }
  };
  var seed = 20241113;
  function rnd() { seed |= 0; seed = seed + 0x6D2B79F5 | 0; var t = Math.imul(seed ^ seed >>> 15, 1 | seed); t = t + Math.imul(t ^ t >>> 7, 61 | t) ^ t; return ((t ^ t >>> 14) >>> 0) / 4294967296; }
  var COL = {
    green: ['#56b856', '#45ad45'], blue: ['#a6c3d3', '#98b9cb'], gray: ['#d4d4d4', '#cacaca'],
    white: ['#fbfbfb', '#fbfbfb'], lblue: ['#b4cddb', '#a6c3d3']
  };
  function pts(z, s) { return s.trim().split(/\s+/).map(function (p) { var a = p.split(','); return T[z](+a[0], +a[1]); }); }
  function Track(svg) { this.svg = svg; this.occ = {}; }
  Track.prototype.add = function (tag, attrs) { var e = document.createElementNS(NS, tag); for (var k in attrs) e.setAttribute(k, attrs[k]); this.svg.appendChild(e); return e; };
  Track.prototype.path = function (d, fill, extra) { var a = { d: d, fill: fill }; for (var k in (extra || {})) a[k] = extra[k]; return this.add('path', a); };
  Track.prototype.rect = function (x, y, w, h, fill) { return this.add('rect', { x: x, y: y, width: w, height: h, fill: fill, 'shape-rendering': 'crispEdges' }); };
  Track.prototype.shape = function (z, s, fill, stroke, sw) { var p = pts(z, s); var d = 'M' + p.map(function (q) { return q[0].toFixed(1) + ' ' + q[1].toFixed(1); }).join('L') + 'Z'; var a = { 'shape-rendering': 'crispEdges' }; if (stroke) { a.stroke = stroke; a['stroke-width'] = sw || 1; } return this.path(d, fill, a); };
  // scanline a polygon on to rows of reads, and remember what each row holds
  Track.prototype.reads = function (col, z, s, top, jit) {
    var p = pts(z, s), c = COL[col], a = '', b = '', occ = this.occ;
    var ymin = Infinity, ymax = -Infinity;
    p.forEach(function (q) { ymin = Math.min(ymin, q[1]); ymax = Math.max(ymax, q[1]); });
    var r0 = Math.floor((ymin - top) / 3);
    for (var y = top + r0 * 3; y < ymax; y += 3) {
      var m = y + 1.5, xs = [];
      for (var i = 0; i < p.length; i++) {
        var u = p[i], v = p[(i + 1) % p.length];
        if ((u[1] <= m && v[1] > m) || (v[1] <= m && u[1] > m)) xs.push(u[0] + (m - u[1]) / (v[1] - u[1]) * (v[0] - u[0]));
      }
      xs.sort(function (m1, m2) { return m1 - m2; });
      for (var k = 0; k + 1 < xs.length; k += 2) {
        var x0 = Math.round(xs[k] + (jit ? (rnd() - .5) * jit : 0)), x1 = Math.round(xs[k + 1] + (jit ? (rnd() - .5) * jit : 0));
        if (x1 <= x0) continue;
        a += 'M' + x0 + ' ' + y + 'h' + (x1 - x0) + 'v3h' + (x0 - x1) + 'z';
        b += 'M' + x0 + ' ' + (y + 2) + 'h' + (x1 - x0) + 'v1h' + (x0 - x1) + 'z';
        (occ[y] = occ[y] || []).push([x0, x1, col]);
      }
    }
    this.path(a, c[0], { 'shape-rendering': 'crispEdges' });
    if (col !== 'white') this.path(b, c[1], { 'shape-rendering': 'crispEdges' });
  };
  Track.prototype.onReads = function (x, y) {
    var r = this.occ[y]; if (!r) return false;
    for (var i = r.length - 1; i >= 0; i--) if (x >= r[i][0] && x + 2 <= r[i][1]) return r[i][2] === 'gray' || r[i][2] === 'green';
    return false;
  };
  Track.prototype.box = function (col, x0, y0, x1, y1, top) { this.reads(col, 'p', x0 + ',' + y0 + ' ' + x1 + ',' + y0 + ' ' + x1 + ',' + y1 + ' ' + x0 + ',' + y1, top, 0); };
  Track.prototype.many = function (col, z, list, top, jit) { var t = this; list.forEach(function (s) { t.reads(col, z, s, top, jit); }); };
  Track.prototype.specks = function (n, x0, x1, y0, y1, top, muted) {
    var cs = muted ? ['#e05050', '#d08040', '#6060d0', '#50a050', '#e01818', '#1818e0', '#008000'] : ['#c03020', '#8a4a10', '#0a6a0a', '#1a4ac0'];
    var d = {};
    for (var i = 0; i < n; i++) {
      for (var tries = 0; tries < 30; tries++) {
        var x = Math.round(x0 + rnd() * (x1 - x0)), y = top + Math.round((y0 + rnd() * (y1 - y0) - top) / 3) * 3;
        if (!this.onReads(x, y)) continue;
        var c = cs[Math.floor(rnd() * cs.length)], w = rnd() < .2 ? 5 : 2;
        d[c] = (d[c] || '') + 'M' + x + ' ' + y + 'h' + w + 'v3h' + (-w) + 'z';
        break;
      }
    }
    for (var k in d) this.path(d[k], k, { 'shape-rendering': 'crispEdges' });
  };
  Track.prototype.grayRow = function (y, x0, x1, col) {
    var x = x0;
    while (x < x1) {
      var w = 30 + rnd() * 150, gap = rnd() < .55;
      var e = Math.min(x1, x + w);
      this.rect(x, y, e - x, 3, gap ? '#fbfbfb' : (col || '#cdcdcd'));
      x = e;
    }
  };
  Track.prototype.sep = function (y, h, c) { this.rect(388, y, 3606, h, c); };
  Track.prototype.dash = function (y) { this.add('path', { d: 'M388 ' + y + 'H3994', stroke: '#c8c8c8', 'stroke-width': 3, 'stroke-dasharray': '16 6 4 6', fill: 'none' }); };
  Track.prototype.ticks = function (list, y) { var t = this; list.forEach(function (r) { t.rect(r[0], y, r[1] - r[0], 6, '#000'); }); };
  Track.prototype.cov = function (z, s) { this.shape(z, s, '#aeaeae'); };
  Track.prototype.arc = function (d, fill, stroke, sw) { this.add('path', { d: d, fill: fill, stroke: stroke || 'none', 'stroke-width': sw || 1 }); };
  Track.prototype.label = function (txt, x, y, cls) { var e = this.add('text', { x: x, y: y, 'class': cls }); e.textContent = txt; return e; };
  Track.prototype.vline = function (x, y0, y1, c) { this.rect(x, y0, 2, y1 - y0, c || '#008f00'); };

  var RED_F = '#c58d90', RED_S = '#a9585e', BLU_F = '#8d8bc2', BLU_S = '#6a6ab4', BLU_D = '#3a3a9c';

  /* ---------- normal ---------- */
  var n = new Track(document.getElementById('trackNormal'));
  n.label('[0 - 1826]', 396, 470, 'scale-label');
  n.cov('z4', '957,172 975,165 990,158 1040,157 1060,160 1140,160 1145,130 1155,80 1165,50 1175,28 1185,22 1195,35 1203,65 1203,172');
  n.cov('z4', '1438,172 1438,65 1445,65 1450,70 1460,80 1472,65 1476,70 1476,172');
  n.cov('z9', '267,172 267,65 275,60 290,75 320,115 340,150 350,172');
  n.cov('z9', '676,172 676,169 729,169 729,172');
  n.vline(1276, 522, 528, '#00a000');
  n.rect(3148, 505, 2, 14, '#c07020'); n.rect(3148, 519, 2, 9, '#008f00');
  n.sep(530, 2, '#c4c4ce');
  // red arcs
  n.arc('M388 577H1458', 'none', '#b4686c', 2);
  n.arc('M388 576H830L1000 578', 'none', '#b4686c', 3);
  n.arc('M388 578C480 580 570 584 594 592L594 590C560 582 470 580 388 581Z', RED_F, RED_S, 1.5);
  n.arc('M1458 592C1462 582 1540 576 1601 576C1665 576 1742 582 1745 592', 'none', RED_S, 2.5);
  n.arc('M1788 592C1800 578 2000 572 2450 571C2900 572 3090 578 3106 592L3098 590C3040 582 2900 579 2450 578C2000 579 1830 582 1792 592Z', RED_F, RED_S, 1.5);
  n.arc('M3326 592C3328 572 3340 567 3349 567C3358 567 3369 572 3371 592L3368 592C3366 580 3358 575 3349 575C3340 575 3331 580 3329 592Z', RED_F, RED_S, 1.5);
  n.arc('M3480 590L3994 576V586L3690 590Z', RED_F, RED_S, 1.5);
  n.arc('M3480 589C3520 578 3560 575 3600 576C3650 578 3680 585 3686 592', 'none', RED_S, 2);
  n.sep(593, 2, '#9c9c9c');
  // blue arcs
  n.arc('M1458 597C1540 614 1665 614 1745 597C1745 628 1660 647 1601 647C1540 647 1458 628 1458 597Z', BLU_F, BLU_S, 2);
  n.arc('M1788 596C2100 614 2800 614 3110 598C3000 632 2700 643 2450 643C2200 643 1900 632 1788 596Z', BLU_F, BLU_S, 2);
  n.arc('M1788 596C2100 612 2800 612 3110 598C2800 621 2100 621 1788 596Z', BLU_D);
  n.arc('M3110 598L3126 596L3110 602Z', BLU_F, BLU_S, 1);
  n.arc('M2064 596Q2180 610 2300 596M2320 596Q2440 606 2545 598M2575 596Q2800 610 3060 596', 'none', '#77779c', 1.5);
  n.sep(650, 2, '#cfcfd8');
  n.ticks([[1368, 1386], [1388, 1406], [1408, 1424], [1426, 1444], [1446, 1464], [1742, 1760], [1762, 1778], [1780, 1798], [3090, 3108]], 654);
  n.rect(2160, 658, 50, 2, '#88c8c8');
  n.dash(664.5);
  // upper strand: green + spans
  var U = 670;
  n.box('blue', 1453, 672, 1741, 757, U); n.box('blue', 1453, 802, 1741, 853, U);
  n.box('blue', 1784, 670, 3104, 865, U);
  n.many('green', 'z10', [
    '38,150 380,150 380,170 372,190 385,235 385,262 408,282 408,294 372,294 402,310 402,322 390,325 410,340 415,353 320,353 320,342 295,322 292,308 275,292 185,292 172,280 170,262 155,248 125,232 118,222 118,170 105,155 105,153 38,153',
    '380,150 490,150 482,170 495,195 482,235 515,240 523,245 523,285 545,290 545,298 523,300 523,310 438,310 432,292 415,270 415,245 392,245 380,200',
    '490,150 692,150 692,345 685,370 660,370 672,400 662,430 688,468 678,500 692,515 692,700 655,700 655,672 642,650 635,585 630,557 600,555 585,535 580,475 568,462 568,420 560,395 558,345 548,290 550,240 515,235 515,205 500,180 490,170',
    '1257,150 1340,150 1340,240 1330,245 1310,265 1335,285 1345,310 1335,330 1340,550 1288,550 1288,520 1280,490 1265,460 1265,425 1257,415',
    '1257,545 1265,545 1290,570 1300,590 1285,610 1305,620 1310,650 1315,670 1325,690 1325,700 1257,700',
    '760,148 870,148 870,153 760,153', '940,148 1042,148 1042,153 940,153', '760,413 870,413 870,432 760,432'
  ], U, 2);
  n.many('green', 'z4', ['776,450 823,450 823,457 776,457', '827,450 870,450 870,453 827,453', '923,450 952,450 952,453 923,453'], U, 1);
  n.many('white', 'z10', ['225,175 255,175 260,195 215,195', '225,205 262,205 272,260 255,260 235,232 225,225', '215,155 238,155 238,165 205,170', '330,158 362,158 365,170 330,172', '325,198 370,198 370,202 325,202', '482,236 518,236 515,246 482,246', '595,170 620,180 605,190', '620,198 630,198 630,238 615,230', '1272,170 1280,175 1272,195 1265,190', '1295,195 1305,215 1320,240 1298,235', '1312,250 1330,250 1330,272 1310,265'], U, 3);
  n.rect(1276, 670, 2, 66, '#008f00');
  n.specks(10, 1160, 1300, 672, 730, U); n.specks(12, 1300, 1450, 672, 840, U); n.specks(7, 1742, 1784, 672, 800, U);
  // white rows with green pieces in the long span
  function whiteRow(t, y, h, x0, x1) { t.rect(x0, y, x1 - x0, h, '#fbfbfb'); }
  whiteRow(n, 708, 3, 1784, 3104); whiteRow(n, 714, 2, 1784, 2110); whiteRow(n, 752, 2, 1786, 2560);
  [[1784, 1834, 708], [1784, 1834, 714], [1895, 1950, 708], [2530, 2580, 708], [2740, 2790, 708], [2951, 3003, 708], [2840, 2930, 708], [3090, 3104, 708], [2560, 2575, 746]].forEach(function (r) { n.rect(r[0], r[2], r[1] - r[0], 3, '#56b856'); });
  [[2951, 3003, 864], [3003, 3057, 867], [2730, 2765, 864], [2950, 3000, 864]].forEach(function (r) { n.rect(r[0], r[2], r[1] - r[0], 3, '#56b856'); });
  // right-hand green
  n.many('green', 'z9', [
    '267,450 345,450 345,458 378,462 378,472 320,474 305,490 330,510 335,550 355,585 310,595 345,625 285,630 290,650 305,680 330,715 335,790 327,820 338,850 345,890 345,960 275,962 272,890 267,830',
    '497,450 558,450 558,458 497,458', '615,450 627,450 627,458 615,458', '632,450 700,450 720,462 745,470 765,485 765,493 700,493 675,480 660,465 632,458', '720,450 765,450 755,462 745,458'
  ], U, 3);
  n.many('white', 'z9', ['272,565 300,568 300,590 272,590', '275,596 335,596 335,612 275,612'], U, 4);
  n.many('green', 'z9', ['275,612 342,612 342,618 275,618'], U, 0);
  n.rect(3148, 815, 2, 110, '#0a8a0a');
  n.specks(16, 3104, 3150, 680, 925, U);
  n.many('lblue', 'z9', ['558,450 615,450 615,458 558,458'], U, 0);
  n.many('blue', 'z9', ['765,450 1435,450 1435,461 765,461', '765,485 1435,485 1435,493 765,493'], U, 0);
  n.many('green', 'z9', ['1177,462 1247,462 1247,477 1177,477'], U, 0);
  n.dash(936);
  // lower strand: gray + spans
  var L = 942;
  n.many('gray', 'z4', ['925,983 1198,983 1198,1486 980,1486 975,1360 963,1150 955,1000 925,985',
    '342,987 410,987 410,1003 360,1003', '415,985 460,985 500,1030 500,1038 455,1038 445,1015 415,990', '500,985 570,985 570,1010 578,1018 530,1018 515,1005', '565,985 638,985 638,1015 565,1015', '735,985 785,985 823,1005 780,1005 755,993 735,990', '827,985 885,985 885,995 840,995'], L, 3);
  n.rect(493, 946, 2, 16, '#c87020');
  n.many('gray', 'z9', ['270,983 378,983 378,998 340,998 320,1003 325,1030 352,1045 352,1068 300,1075 305,1130 340,1135 315,1160 320,1200 358,1197 320,1220 330,1240 338,1350 358,1392 295,1400 340,1420 300,1450 320,1486 270,1486',
    '500,983 765,983 765,1050 755,1085 720,1090 740,1140 760,1170 700,1170 675,1160 650,1100 615,1053 555,1053 530,1000 500,985',
    '790,1040 945,1040 945,1045 790,1045', '760,1085 870,1085 875,1100 800,1095'], L, 3);
  n.box('blue', 1453, 951, 1741, 1198, L);
  n.box('blue', 1784, 942, 3104, 1198, L);
  n.box('gray', 1741, 942, 1784, 1198, L);
  n.box('lblue', 1453, 942, 1741, 945, L);
  n.many('white', 'z4', ['1005,1040 1020,1140 1020,1200 1028,1300 1045,1420 1055,1486 1038,1486 1024,1420 1013,1300 1008,1200 1000,1100',
    '1060,1070 1072,1200 1084,1340 1105,1420 1125,1486 1085,1486 1078,1420 1072,1340 1065,1200 1056,1080',
    '1120,1200 1136,1340 1150,1486 1142,1486 1130,1340 1114,1200',
    '1165,1120 1172,1180 1185,1300 1195,1400 1190,1400 1178,1300 1165,1180', '1100,1040 1107,1040 1116,1120 1108,1120', '1150,1030 1158,1030 1163,1070 1155,1070'], L, 3);
  n.many('white', 'z4', ['1443,1035 1446,1035 1448,1120 1445,1120', '1452,1180 1456,1180 1468,1300 1464,1300'], L, 0);
  // gaps along the exon edges
  for (var i = 0; i < 50; i++) { var yy = L + Math.floor(rnd() * 85) * 3; n.rect(1440 + rnd() * 12, yy, 4 + rnd() * 8, 3, '#fbfbfb'); }
  n.many('blue', 'z4', ['320,984 340,984 340,986 320,986'], L, 0);
  n.rect(388, 963, 1065, 3, '#a6c3d3'); n.rect(388, 1177, 1065, 3, '#a6c3d3'); n.rect(388, 1057, 214, 3, '#a6c3d3');
  n.rect(1221, 960, 46, 3, '#4848c0'); n.rect(1180, 1133, 46, 3, '#4848c0'); n.rect(1325, 1136, 44, 3, '#4848c0');
  [948, 953, 1157].forEach(function (y) { n.grayRow(y, 1453, 1741); });
  n.rect(1784, 963, 1320, 3, '#a6c3d3');
  [951, 963, 1138, 1164, 1178].forEach(function (y) { n.grayRow(y, 1784, 3104); });
  n.rect(1276, 942, 2, 256, '#009000');
  n.specks(70, 1165, 1450, 945, 1195, L, true); n.specks(24, 1745, 1782, 945, 1195, L, true);
  n.specks(14, 3106, 3146, 945, 1195, L, true);
  for (var c1 = 0; c1 < 16; c1++) n.rect(3148, 1070 + c1 * 6 + (c1 % 3) * 3, 2, 3, '#0a8a0a');
  n.specks(22, 3285, 3475, 945, 1040, L, true);
  n.many('lblue', 'z9', ['553,985 618,985 618,1003 553,1003', '553,1010 618,1010 618,1018 553,1018', '553,1028 618,1028 618,1053 553,1053'], L, 0);
  n.many('blue', 'z9', ['763,983 1435,983 1435,1040 763,1040', '763,1052 1435,1052 1435,1085 763,1085', '765,1166 1035,1166 1035,1170 765,1170'], L, 0);
  n.many('white', 'z9', ['1035,1046 1435,1046 1435,1052 1035,1052'], L, 0);
  n.rect(3570, 1006, 60, 3, '#d0d0d0');

  /* ---------- tumor ---------- */
  var t = new Track(document.getElementById('trackTumor'));
  t.label('[0 - 2149]', 396, 1228, 'scale-label');
  t.cov('z5', '957,177 965,158 985,142 1000,142 1010,152 1050,155 1130,155 1140,155 1150,90 1160,55 1175,40 1185,20 1195,40 1203,65 1203,177');
  t.cov('z5', '1438,177 1438,70 1450,75 1460,95 1472,85 1476,90 1476,177');
  t.cov('z12', '267,177 267,88 290,90 300,105 320,125 335,150 350,177');
  t.cov('z12', '653,177 653,173 692,173 692,177');
  t.vline(1276, 1276, 1286, '#00a000');
  t.sep(1288, 2, '#c4c4ce');
  t.arc('M3326 1351C3328 1328 3338 1316 3349 1316C3360 1316 3369 1328 3371 1351L3368 1351C3366 1342 3358 1336 3349 1336C3340 1336 3331 1342 3329 1351Z', RED_F, RED_S, 2);
  t.arc('M3480 1349L3994 1333V1345L3700 1349Z', RED_F, RED_S, 1.5);
  t.arc('M3600 1344L3994 1339V1345L3600 1348Z', '#a9585e');
  t.arc('M3480 1348C3520 1336 3560 1333 3600 1334C3650 1337 3680 1343 3686 1350', 'none', RED_S, 2);
  t.sep(1352, 2, '#9c9c9c');
  t.arc('M1458 1356C1540 1373 1665 1373 1745 1356C1745 1387 1660 1404 1601 1404C1540 1404 1458 1387 1458 1356Z', BLU_F, BLU_S, 2);
  t.arc('M1788 1355C2100 1374 2800 1374 3110 1355C3000 1390 2700 1405 2450 1405C2200 1405 1900 1390 1788 1355Z', BLU_F, BLU_S, 2);
  t.arc('M1788 1355C2100 1372 2800 1372 3110 1355C2800 1382 2100 1382 1788 1355Z', BLU_D);
  t.arc('M3110 1356L3126 1354L3110 1361Z', BLU_F, BLU_S, 1);
  t.sep(1408, 2, '#cfcfd8');
  t.ticks([[1156, 1172], [1175, 1192], [1194, 1212], [1215, 1233], [1368, 1386], [1388, 1406], [1408, 1424], [1426, 1444], [1446, 1463], [1741, 1758], [1761, 1776], [1779, 1796], [3092, 3110]], 1412);
  var U2 = 1416;
  t.rect(388, 1416, 6, 2, '#56b856');
  t.box('blue', 1453, 1416, 1743, 1589, U2);
  t.rect(1453, 1606, 290, 3, '#a6c3d3'); t.box('blue', 1453, 1638, 1743, 1644, U2);
  t.box('blue', 1784, 1416, 3104, 1692, U2);
  t.many('green', 'z5', [
    '952,445 1200,445 1200,800 1195,810 1190,860 1197,900 1152,903 1150,830 1145,750 1125,710 1115,712 1115,725 1070,723 1068,680 1030,680 1033,695 990,695 985,650 970,590 958,530 955,480',
    '1438,445 1472,445 1472,800 1470,865 1452,865 1445,840 1438,800', '1438,903 1463,903 1463,915 1438,915',
    '1188,905 1200,905 1200,915 1188,915', '1283,805 1330,805 1330,812 1283,812', '1315,812 1362,812 1362,822 1315,822', '1330,822 1375,822 1375,838 1330,838', '1328,838 1375,838 1375,845 1328,845',
    '371,445 409,445 409,450 371,450', '437,445 480,445 480,452 490,452 490,460 445,460 437,452', '492,445 530,445 530,452 552,452 552,458 530,458 552,465 552,474 510,474 492,468', '763,445 808,445 808,457 763,457',
    '1525,1015 1568,1015 1568,1022 1525,1022'
  ], U2, 3);
  t.many('white', 'z5', ['1000,525 1012,535 1032,665 1020,640 1006,590', '995,480 1001,480 1001,500 995,500', '1045,445 1056,480 1064,540 1068,680 1060,680 1056,560 1048,500', '1090,635 1110,640 1113,680 1092,680', '1158,635 1172,635 1188,715 1168,715', '1100,470 1108,470 1108,500 1100,500', '1150,470 1158,480 1158,510 1152,500', '1075,550 1080,560 1078,590 1072,580', '1115,550 1122,550 1126,590 1118,590', '1160,540 1176,540 1176,556 1160,556', '1130,600 1136,600 1138,635 1132,635', '1195,620 1200,620 1200,640 1190,640', '1440,480 1448,480 1448,500 1440,500', '1445,530 1452,530 1450,545 1445,545', '1458,570 1465,570 1463,600 1458,600', '1462,640 1470,640 1470,690 1464,690', '1468,760 1472,760 1472,775 1466,775'], U2, 3);
  t.rect(1276, 1416, 2, 222, '#008f00');
  t.specks(16, 1160, 1450, 1420, 1640, U2); t.specks(9, 1743, 1783, 1420, 1620, U2);
  t.rect(1784, 1420, 1320, 6, '#fbfbfb');
  [[1796, 1852], [1910, 1965], [2060, 2110], [2220, 2260], [2320, 2380], [2480, 2540], [2650, 2710], [2775, 2820], [2940, 2987], [3038, 3092]].forEach(function (r) { t.rect(r[0], 1420, r[1] - r[0], 3, '#56b856'); });
  [[1784, 3104, 1500], [1784, 3104, 1549], [1784, 3104, 1560]].forEach(function (r) { t.rect(r[0], r[2], r[1] - r[0], 2, '#fbfbfb'); });
  [[1796, 1850, 1499], [2010, 2060, 1499], [2950, 3003, 1499], [3040, 3089, 1499], [1810, 1860, 1549], [2957, 3005, 1549], [1850, 1900, 1560], [2310, 2360, 1499], [2640, 2690, 1499]].forEach(function (r) { t.rect(r[0], r[2], r[1] - r[0], 3, '#56b856'); });
  t.many('green', 'z12', [
    '267,445 322,445 322,455 332,460 285,475 350,478 345,500 300,515 315,540 300,545 320,590 332,600 325,640 335,690 345,720 348,735 330,770 345,780 348,815 285,815 285,835 315,840 300,870 328,870 335,925 325,985 335,1020 348,1040 345,1090 348,1125 275,1125 275,1030 267,1015',
    '328,445 390,445 390,450 328,450', '447,445 517,445 517,458 552,465 552,470 490,468 485,460 447,458', '538,445 552,445 552,458 538,458',
    '617,445 765,445 765,475 725,475 725,505 655,505 652,475 617,465', '55,452 115,452 115,464 55,464'], U2, 2);
  t.many('white', 'z12', ['700,460 735,460 735,470 700,470', '290,735 300,740 300,770 275,760'], U2, 2);
  t.specks(10, 3104, 3160, 1425, 1680, U2);
  t.many('lblue', 'z12', ['552,445 617,445 617,473 552,473'], U2, 0);
  t.many('white', 'z12', ['552,458 617,458 617,466 552,466'], U2, 0);
  t.many('blue', 'z12', ['765,445 1435,445 1435,473 765,473'], U2, 0);
  t.dash(1751);
  // lower
  var L2 = 1756;
  t.many('gray', 'z5', ['920,1147 1200,1147 1200,1536 958,1536 953,1200 952,1160 920,1150',
    '320,1147 345,1150 352,1195 320,1197', '362,1147 420,1147 440,1185 395,1185 380,1170', '420,1147 470,1147 490,1185 480,1210 505,1262 515,1278 462,1278 455,1230 435,1190', '490,1147 555,1147 565,1195 515,1195 495,1165', '555,1147 600,1147 600,1155 555,1155',
    '695,1147 750,1147 785,1175 740,1180 710,1168', '795,1147 890,1147 890,1150 848,1155 848,1175 888,1175 888,1180 803,1172'], L2, 3);
  t.box('blue', 1453, 1756, 1743, 1944, L2);
  t.box('gray', 1743, 1756, 1784, 1944, L2);
  t.box('blue', 1784, 1756, 3104, 1944, L2);
  t.many('white', 'z5', ['1000,1170 1006,1170 1000,1290 1008,1440 1018,1536 1006,1536 998,1440 992,1290',
    '1048,1150 1054,1150 1058,1300 1064,1536 1056,1536 1050,1300 1044,1180',
    '1095,1170 1102,1170 1098,1300 1110,1450 1116,1536 1108,1536 1101,1450 1092,1300',
    '1148,1170 1153,1170 1148,1260 1162,1360 1168,1536 1160,1536 1153,1360 1143,1260',
    '1000,1445 1080,1445 1080,1450 1000,1450', '1045,1315 1056,1315 1056,1328 1045,1328', '1062,1170 1068,1170 1070,1240 1064,1240', '1190,1170 1197,1170 1195,1240 1190,1240'], L2, 3);
  for (var j = 0; j < 40; j++) { var y2 = L2 + Math.floor(rnd() * 62) * 3; t.rect(1444 + rnd() * 6, y2, 4 + rnd() * 8, 3, '#fbfbfb'); }
  t.rect(1159, 1800, 44, 3, '#4848c0');
  t.rect(1276, 1756, 2, 188, '#009000');
  t.specks(70, 1160, 1450, 1760, 1940, L2, true); t.specks(28, 1745, 1782, 1760, 1940, L2, true);
  t.many('gray', 'z12', ['269,1147 345,1150 345,1240 350,1255 285,1260 348,1280 345,1295 295,1295 295,1330 338,1335 290,1345 345,1348 300,1380 322,1385 300,1400 310,1536 269,1536',
    '350,1147 430,1150 450,1173 405,1173',
    '447,1147 765,1147 765,1265 705,1265 710,1310 740,1348 670,1348 640,1300 620,1258 555,1258 552,1200 490,1170 450,1160'], L2, 3);
  t.specks(18, 3106, 3165, 1760, 1900, L2, true); t.specks(26, 3260, 3480, 1760, 1850, L2, true);
  t.many('lblue', 'z12', ['552,1155 617,1155 617,1183 552,1183', '552,1192 617,1192 617,1215 552,1215', '552,1222 617,1222 617,1258 552,1258'], L2, 0);
  t.many('white', 'z12', ['680,1220 735,1220 735,1258 680,1258'], L2, 0);
  t.many('blue', 'z12', ['765,1147 1435,1147 1435,1265 765,1265', '1085,1270 1435,1270 1435,1285 1085,1285'], L2, 0);
  t.many('gray', 'z12', ['1032,1160 1083,1160 1083,1172 1032,1172', '1045,1258 1280,1258 1280,1268 1045,1268', '1093,1285 1197,1285 1197,1300 1229,1300 1229,1312 1252,1312 1252,1315 1180,1315 1155,1300 1093,1292'], L2, 1);
  t.rect(3692, 1798, 30, 3, '#e8e8e8'); t.rect(3878, 1808, 116, 5, '#fbfbfb');
  t.many('white', 'z12', ['1280,1258 1435,1258 1435,1262 1280,1262'], L2, 0);
  t.rect(3700, 1815, 30, 6, '#e05050'); t.rect(3722, 1820, 8, 4, '#e05050');
  t.rect(3700, 1812, 2, 8, '#008f00');

  /* ---------- gene ---------- */
  var g = new Track(document.getElementById('trackGene'));
  var GC = '#0000a8';
  g.rect(1454, 1976.5, 2540, 3, '#0000d8');
  g.rect(1454, 1975.5, 2540, 1, '#9a9af0'); g.rect(1454, 1979.5, 2540, 1, '#9a9af0');
  function chev(x, dir, col, w) { g.add('path', { d: dir > 0 ? 'M' + (x - 3) + ' 1973L' + (x + 2) + ' 1978L' + (x - 3) + ' 1983' : 'M' + (x + 3) + ' 1973L' + (x - 2) + ' 1978L' + (x + 3) + ' 1983', fill: 'none', stroke: col, 'stroke-width': w || 2 }); }
  var x;
  for (x = 1489; x < 3100; x += 60) chev(x, -1, '#0000e0');
  [3353, 3517, 3577, 3637, 3759, 3819, 3879, 3939].forEach(function (v) { chev(v, 1, '#0000e0'); });
  [[388, 678, 0], [1154, 1406, 0], [1406, 1458, 1], [1744, 1788, 1], [3106, 3188, 1], [3188, 3326, 0], [3370, 3488, 0], [3686, 3730, 0]].forEach(function (r) { if (r[2]) g.rect(r[0], 1964, r[1] - r[0], 28, GC); else g.rect(r[0], 1970, r[1] - r[0], 16, GC); });
  for (x = 408; x < 670; x += 60) chev(x, 1, '#ffffff');
  chev(3168, -1, '#ffffff'); chev(3288, 1, '#ffffff'); chev(3428, 1, '#ffffff');
  // RL labels on top of the reads
  [[n, 670, 688], [t, 1416, 1438]].forEach(function (a) { a[0].rect(392, a[1], 30, 22, '#fbfbfb'); a[0].label('RL', 396, a[2], 'rl-label'); });
})();
```
